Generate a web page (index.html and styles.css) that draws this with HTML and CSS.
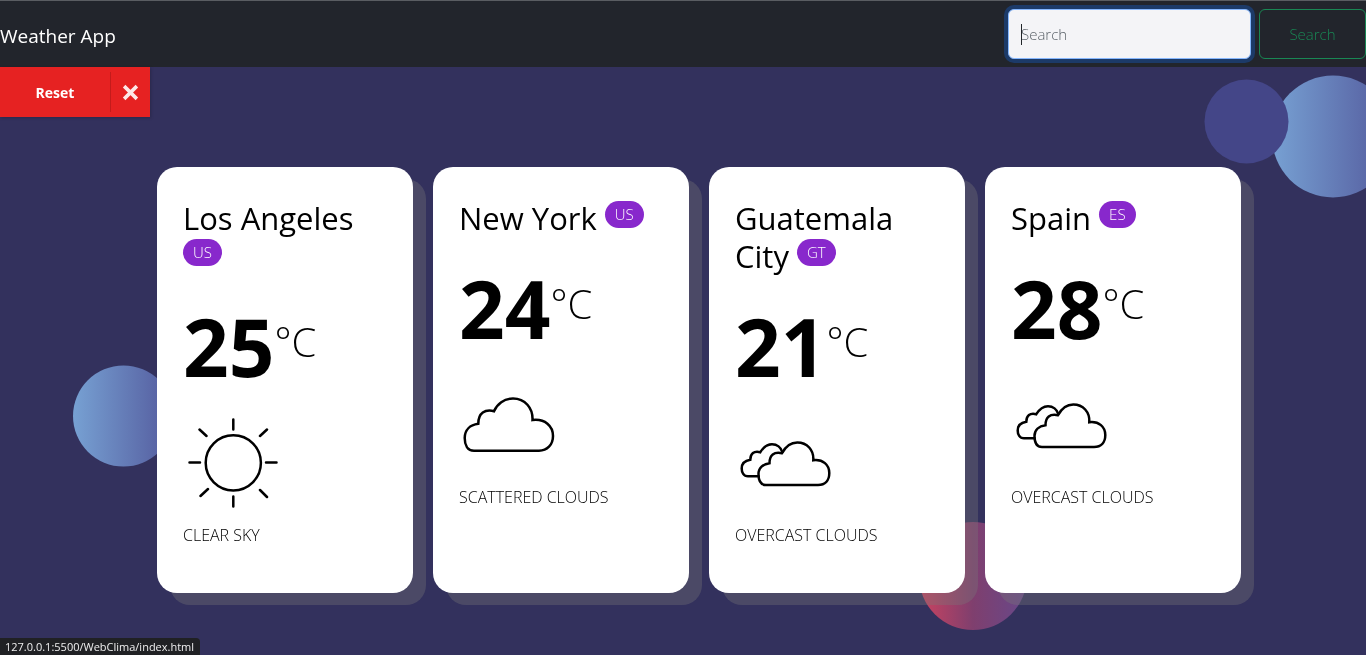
FILE: index.html
```html
<!DOCTYPE html>
<html lang="en">
<head>
<meta charset="utf-8">
<meta name="viewport" content="width=device-width, initial-scale=1">
<title>Weather App</title>
<link rel="stylesheet" href="styles.css">
</head>
<body>
<svg class="backdrop" viewBox="0 0 1366 655" preserveAspectRatio="xMidYMid slice" aria-hidden="true">
  <defs>
    <linearGradient id="blue"><stop offset="0" stop-color="#77a1d3"/><stop offset="1" stop-color="#53599c"/></linearGradient>
    <linearGradient id="red"><stop offset="0" stop-color="#cb4360"/><stop offset=".5" stop-color="#7f3f6e"/><stop offset="1" stop-color="#67488a"/></linearGradient>
  </defs>
  <circle cx="1333" cy="136.500" r="61" fill="url(#blue)"/>
  <circle cx="1246.500" cy="121.500" r="42" fill="#444688"/>
  <circle cx="123.500" cy="416" r="50.500" fill="url(#blue)"/>
  <circle cx="973" cy="576" r="54" fill="url(#red)"/>
</svg>
<header class="navbar">
  <a class="brand" href="#">Weather App</a>
  <form class="search">
    <div class="field"><input class="search-input" type="search" placeholder="Search" aria-label="Search"></div>
    <button class="search-button" type="submit">Search</button>
  </form>
</header>
<main class="content">
  <button class="reset" type="button">
    <span class="reset-label">Reset</span>
    <span class="reset-icon"><svg viewBox="0 0 24 24" aria-hidden="true"><path d="M3 3l18 18M21 3L3 21"/></svg></span>
  </button>
  <ul class="cities">
    <li class="card">
      <h2 class="city">Los Angeles <span class="country">US</span></h2>
      <div class="temp">25<span class="unit">°C</span></div>
      <svg class="icon" viewBox="0 0 100 100" aria-hidden="true"><circle cx="50.300" cy="49.800" r="27.600"/><path d="M50.300 6.500v10M50.300 83.500v10M6.500 49.500h10.500M83 49.500h10.500M16.500 16.500l7 6.500M84 16.500l-7 6.500M25 76l-7.500 7M77 77l7 7"/></svg>
      <p class="sky">CLEAR SKY</p>
    </li>
    <li class="card">
      <h2 class="city">New York <span class="country">US</span></h2>
      <div class="temp">24<span class="unit">°C</span></div>
      <svg class="icon" viewBox="0 0 100 100" aria-hidden="true"><path d="M15 75.700C8.500 75.700 5.700 70 5.700 63C5.700 55 11 49.800 19.300 48.700C19.300 38 26 34 35 36.200C38 29 45 23.500 54 23.500C66 23.500 74 33 73.500 45C86 43.500 94 51 94 61C94 70 88 75.700 80 75.700Z"/></svg>
      <p class="sky">SCATTERED CLOUDS</p>
    </li>
    <li class="card">
      <h2 class="city">Guatemala City <span class="country">GT</span></h2>
      <div class="temp">21<span class="unit">°C</span></div>
      <svg class="icon" viewBox="0 0 100 100" aria-hidden="true"><path d="M23.500 63.300H13C8.500 63.300 6.700 59.500 6.700 55.500C6.700 50.500 10 47.500 15.300 46.700C15.300 40.500 19 37.500 25.300 39.200C28.500 34 32 31.200 37 31.200C42 31.200 46 34.500 47.300 39"/><path d="M31 72C26 72 23.500 67.500 23.500 61C23.500 55 28 51 34.500 50.200C34.500 42 39 38.500 47 40.200C50.500 33.500 55.500 29.400 62.300 29.400C72 29.400 79 37 78.300 47.200C88 46 94.300 52 94.300 60C94.300 67.500 90 72 83 72Z"/></svg>
      <p class="sky">OVERCAST CLOUDS</p>
    </li>
    <li class="card">
      <h2 class="city">Spain <span class="country">ES</span></h2>
      <div class="temp">28<span class="unit">°C</span></div>
      <svg class="icon" viewBox="0 0 100 100" aria-hidden="true"><path d="M23.500 63.300H13C8.500 63.300 6.700 59.500 6.700 55.500C6.700 50.500 10 47.500 15.300 46.700C15.300 40.500 19 37.500 25.300 39.200C28.500 34 32 31.200 37 31.200C42 31.200 46 34.500 47.300 39"/><path d="M31 72C26 72 23.500 67.500 23.500 61C23.500 55 28 51 34.500 50.200C34.500 42 39 38.500 47 40.200C50.500 33.500 55.500 29.400 62.300 29.400C72 29.400 79 37 78.300 47.200C88 46 94.300 52 94.300 60C94.300 67.500 90 72 83 72Z"/></svg>
      <p class="sky">OVERCAST CLOUDS</p>
    </li>
  </ul>
</main>
<div class="status">127.0.0.1:5500/WebClima/index.html</div>
</body>
</html>
```
FILE: styles.css
```css
* { box-sizing: border-box; }

body {
  margin: 0;
  min-height: 100vh;
  background: #33315d;
  color: #000;
  font-family: "Open Sans", "Noto Sans", sans-serif;
  font-size: 15px;
  font-weight: 300;
}

.backdrop {
  position: fixed;
  inset: 0;
  z-index: -1;
  width: 100%;
  height: 100%;
}

.navbar {
  display: flex;
  align-items: center;
  justify-content: space-between;
  padding: 8px 0;
  border-top: 1px solid #5a5d62;
  background: #22252c;
}

.brand {
  padding-top: 3px;
  color: #fff;
  font-size: 19px;
  font-weight: 400;
  text-decoration: none;
}

.search { display: flex; gap: 8px; }

.field { position: relative; }

/* text caret */
.field::before {
  content: "";
  position: absolute;
  left: 13px;
  top: 15px;
  width: 1px;
  height: 21px;
  background: #212529;
}

.search-input {
  display: block;
  width: 243px;
  height: 50px;
  padding: 0 12px;
  border: 1px solid #86b7fe;
  border-radius: 6px;
  outline: 0;
  background: #f4f4f7;
  box-shadow: 0 0 0 4px #1c3a68;
  font: inherit;
  appearance: none;
}

.search-input::placeholder { color: #5c636a; opacity: 1; }

.search-button {
  min-width: 107px;
  height: 50px;
  padding: 0 28px;
  border: 1px solid #198754;
  border-radius: 6px;
  background: transparent;
  color: #198754;
  font: inherit;
}

.reset {
  display: flex;
  align-items: center;
  width: 150px;
  height: 50px;
  padding: 0;
  border: 0;
  background: #e62222;
  box-shadow: 1px 1px 3px rgba(0, 0, 0, .2);
  color: #fff;
  font: inherit;
  font-size: 14px;
  font-weight: 700;
}

.reset-label { flex: 1; }

.reset-icon {
  display: flex;
  align-items: center;
  justify-content: center;
  width: 40px;
  height: 40px;
  border-left: 1px solid #c41b1b;
}

.reset-icon svg {
  width: 17px;
  height: 17px;
  fill: none;
  stroke: #fde8e8;
  stroke-width: 5;
}

.cities {
  display: grid;
  grid-template-columns: repeat(4, 1fr);
  gap: 20px;
  max-width: 1116px;
  margin: 50px auto;
  padding: 0 0 0 32px;
  list-style: none;
}

.card {
  padding: 32px 26px 46px;
  border-radius: 20px;
  background: #fff;
  box-shadow: 13px 12px 0 rgba(120, 120, 120, .35);
}

.city {
  margin: 0 0 23px;
  font-size: 31px;
  font-weight: 400;
  line-height: 38px;
}

.country {
  display: inline-block;
  margin-top: 2px;
  padding: 0 10px;
  border-radius: 14px;
  background: #8828cc;
  color: #fff;
  font-size: 15px;
  font-weight: 300;
  line-height: 27px;
  vertical-align: top;
}

.temp {
  display: flex;
  align-items: flex-start;
  font-size: 80px;
  font-weight: 700;
  line-height: 96px;
}

.unit {
  padding-top: 24px;
  font-size: 40px;
  font-weight: 300;
  line-height: 40px;
}

.icon {
  display: block;
  width: 100px;
  height: 100px;
  margin: 19px 0 10px;
  fill: none;
  stroke: #000;
  stroke-width: 2.5;
  stroke-linecap: round;
}

.sky {
  margin: 0;
  font-size: 16px;
  line-height: 24px;
}

.status {
  position: fixed;
  left: 0;
  bottom: 0;
  padding: 0 6px 0 5px;
  border-radius: 0 4px 0 0;
  background: #202124;
  color: #eee;
  font-size: 11px;
  font-weight: 400;
  line-height: 17px;
}
```
